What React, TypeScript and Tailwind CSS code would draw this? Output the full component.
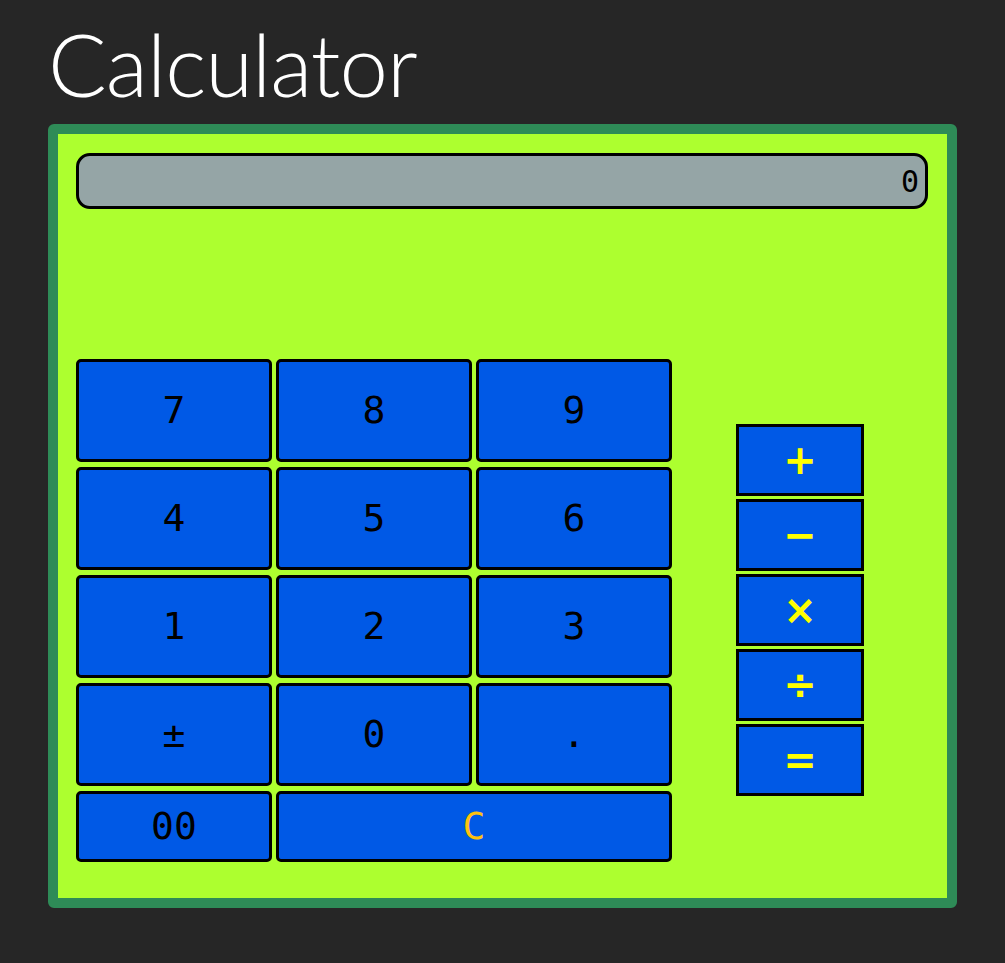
const numKeys = ["7", "8", "9", "4", "5", "6", "1", "2", "3", "±", "0", "."];
const opKeys = ["+", "−", "×", "÷", "="];

const mono = "font-['DejaVu_Sans_Mono','Liberation_Mono',monospace]";

const App = () => {
  return (
    <div className="min-h-screen bg-[#262626] pl-[48px] pt-[20px]">
      <h1 className="font-['Lato','Open_Sans',sans-serif] font-light text-[87px] leading-[87px] text-white tracking-[-1px]">
        Calculator
      </h1>
      <div className="mt-[17px] w-[909px] rounded-[6px] border-[10px] border-[#2e8b57] bg-[#adff2f] pl-[18px] pr-[19px] pt-[19px] pb-[36px]">
        <div
          className={`flex h-[56px] items-center justify-end rounded-[14px] border-[3px] border-black bg-[#95a5a6] pr-[6px] text-[30px] text-black ${mono}`}
        >
          0
        </div>
        <div className="mt-[150px] flex">
          <div className="grid w-[596px] grid-cols-[196px_196px_196px] gap-x-[4px] gap-y-[5px]">
            {numKeys.map((k) => (
              <button
                key={k}
                className={`flex h-[103px] items-center justify-center rounded-[5px] border-[3px] border-black bg-[#0059e6] text-[38px] text-black ${mono}`}
              >
                {k}
              </button>
            ))}
            <button
              className={`flex h-[71px] items-center justify-center rounded-[5px] border-[3px] border-black bg-[#0059e6] text-[38px] text-black ${mono}`}
            >
              00
            </button>
            <button
              className={`col-span-2 flex h-[71px] items-center justify-center rounded-[5px] border-[3px] border-black bg-[#0059e6] text-[38px] text-[#ffc20e] ${mono}`}
            >
              C
            </button>
          </div>
          <div className="flex flex-1 flex-col items-center justify-center gap-[3px] pb-[2px]">
            {opKeys.map((k) => (
              <button
                key={k}
                className="flex h-[72px] w-[128px] items-center justify-center border-[3px] border-black bg-[#0059e6] font-['DejaVu_Sans',sans-serif] text-[40px] font-bold leading-none text-[#ffff00]"
              >
                {k}
              </button>
            ))}
          </div>
        </div>
      </div>
    </div>
  );
};

export default App;
